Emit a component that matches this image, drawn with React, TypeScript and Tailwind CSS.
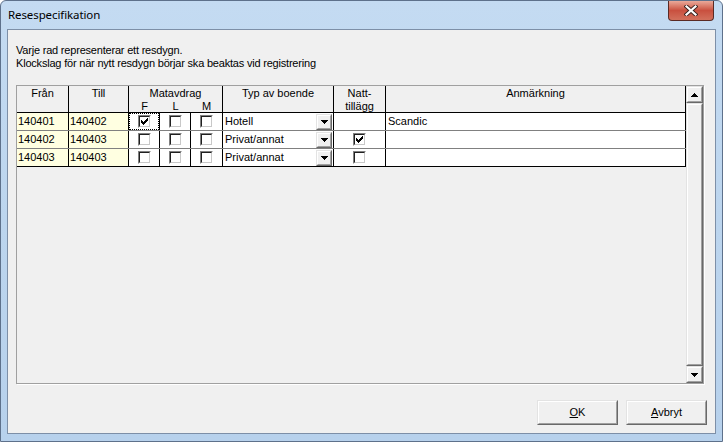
import React from "react";

type Row = {
  from: string;
  to: string;
  f: boolean;
  l: boolean;
  m: boolean;
  typ: string;
  natt: boolean | null;
  anm: string;
  focus?: boolean;
};

const rows: Row[] = [
  { from: "140401", to: "140402", f: true, l: false, m: false, typ: "Hotell", natt: null, anm: "Scandic", focus: true },
  { from: "140402", to: "140403", f: false, l: false, m: false, typ: "Privat/annat", natt: true, anm: "" },
  { from: "140403", to: "140403", f: false, l: false, m: false, typ: "Privat/annat", natt: false, anm: "" },
];

const CHECK = [
  [6, 0], [5, 1], [6, 1], [0, 2], [4, 2], [5, 2], [6, 2], [0, 3], [1, 3], [3, 3], [4, 3], [5, 3],
  [0, 4], [1, 4], [2, 4], [3, 4], [4, 4], [1, 5], [2, 5], [3, 5], [2, 6],
];

const CheckMark = () => (
  <svg width="7" height="7" viewBox="0 0 7 7" shapeRendering="crispEdges">
    {CHECK.map(([x, y]) => (
      <rect key={`${x}-${y}`} x={x} y={y} width="1" height="1" fill="#000" />
    ))}
  </svg>
);

const Arrow = ({ up }: { up?: boolean }) => (
  <svg width="7" height="4" viewBox="0 0 7 4" shapeRendering="crispEdges" className={up ? "rotate-180" : ""}>
    <rect x="0" y="0" width="7" height="1" fill="#000" />
    <rect x="1" y="1" width="5" height="1" fill="#000" />
    <rect x="2" y="2" width="3" height="1" fill="#000" />
    <rect x="3" y="3" width="1" height="1" fill="#000" />
  </svg>
);

const Check = ({ on }: { on: boolean }) => (
  <div className="h-[13px] w-[13px] border border-t-[#808080] border-l-[#808080] border-b-white border-r-white">
    <div className="flex h-full w-full items-center justify-center border border-t-[#202020] border-l-[#202020] border-b-[#c8c8c8] border-r-[#c8c8c8] bg-white">
      {on && <CheckMark />}
    </div>
  </div>
);

// classic raised 3d face
const Raised = ({ className, children }: { className: string; children?: React.ReactNode }) => (
  <div className={`border border-t-[#e3e3e3] border-l-[#e3e3e3] border-b-[#696969] border-r-[#696969] bg-[#f0f0f0] ${className}`}>
    <div className="flex h-full w-full items-center justify-center border border-t-white border-l-white border-b-[#a0a0a0] border-r-[#a0a0a0]">
      {children}
    </div>
  </div>
);

const CheckCell = ({ on, w, focus }: { on: boolean; w: string; focus?: boolean }) => (
  <div className={`${w} flex h-full items-center justify-center border-r border-black bg-white`}>
    {focus ? (
      <div className="flex h-full w-full items-center justify-center border border-dotted border-black">
        <Check on={on} />
      </div>
    ) : (
      <Check on={on} />
    )}
  </div>
);

const App = () => {
  return (
    <div className="h-[442px] w-[723px] bg-white">
      <div className="flex h-full w-full flex-col overflow-hidden rounded-t-[6px] border border-[#5e718b] bg-linear-to-b from-[#c4dbf2] via-[#bcd5ee] to-[#b7d1ec] font-['Liberation_Sans',Arial,sans-serif] text-[11px] leading-[13px] text-black">
        {/* TITLE BAR */}
        <div className="relative flex h-[28px] shrink-0 items-center pl-[7px]">
          <span className="font-['Noto_Sans',sans-serif] text-[11.5px] leading-[16px] tracking-[-0.1px] text-black">Resespecifikation</span>
          <div className="absolute right-[8px] top-0 flex h-[20px] w-[46px] items-center justify-center rounded-b-[4px] border border-t-0 border-[#5a2a24] bg-linear-to-b from-[#e9a99a] via-[#c9503f] to-[#d2705c]">
            <svg width="14" height="11" viewBox="0 0 14 11">
              <path d="M2.5 1.5 L11.5 9.5 M11.5 1.5 L2.5 9.5" stroke="#3a2420" strokeWidth="4" strokeLinecap="square" />
              <path d="M2.5 1.5 L11.5 9.5 M11.5 1.5 L2.5 9.5" stroke="#ffffff" strokeWidth="2.2" strokeLinecap="square" />
            </svg>
          </div>
        </div>

        {/* CLIENT AREA */}
        <div className="mx-[6px] mb-[7px] flex flex-1 flex-col border border-[#7d8fa7] bg-[#f0f0f0] px-[8px] pt-[14px]">
          <p className="tracking-[-0.2px]">Varje rad representerar ett resdygn.</p>
          <p className="tracking-[-0.2px]">Klockslag för när nytt resdygn börjar ska beaktas vid registrering</p>

          {/* GRID */}
          <div className="mt-[15px] flex h-[299px] w-[688px] border border-[#a0a0a0] shadow-[1px_1px_0_#ffffff]">
            <div className="flex w-[669px] flex-col">
              {/* HEADER */}
              <div className="flex h-[27px] shrink-0 border-b border-black text-center">
                <div className="w-[52px] border-r border-black pt-[1px]">Från</div>
                <div className="w-[60px] border-r border-black pt-[1px]">Till</div>
                <div className="flex w-[94px] flex-col border-r border-black pt-[1px]">
                  <span>Matavdrag</span>
                  <div className="flex">
                    <span className="w-[31px]">F</span>
                    <span className="w-[31px]">L</span>
                    <span className="w-[31px]">M</span>
                  </div>
                </div>
                <div className="w-[111px] border-r border-black pt-[1px]">Typ av boende</div>
                <div className="flex w-[52px] flex-col border-r border-black pt-[1px]">
                  <span>Natt-</span>
                  <span>tillägg</span>
                </div>
                <div className="w-[300px] border-r border-black pt-[1px]">Anmärkning</div>
              </div>

              {/* ROWS */}
              {rows.map((r, i) => (
                <div
                  key={r.from + i}
                  className={`flex h-[18px] shrink-0 border-b ${i === rows.length - 1 ? "border-black" : "border-[#808080]"}`}
                >
                  <div className="flex w-[52px] items-center border-r border-black bg-[#ffffe1] pl-[1px]">{r.from}</div>
                  <div className="flex w-[60px] items-center border-r border-black bg-[#ffffe1] pl-[1px]">{r.to}</div>
                  <CheckCell on={r.f} w="w-[31px]" focus={r.focus} />
                  <CheckCell on={r.l} w="w-[31px]" />
                  <CheckCell on={r.m} w="w-[32px]" />
                  <div className="flex w-[111px] items-center justify-between border-r border-black bg-white pl-[2px] pr-[1px]">
                    <span>{r.typ}</span>
                    <Raised className="h-[16px] w-[16px]">
                      <Arrow />
                    </Raised>
                  </div>
                  <div className="flex w-[52px] items-center justify-center border-r border-black bg-white">
                    {r.natt !== null && <Check on={r.natt} />}
                  </div>
                  <div className="flex w-[300px] items-center border-r border-black bg-white pl-[2px]">{r.anm}</div>
                </div>
              ))}
              <div className="flex-1" />
            </div>

            {/* SCROLLBAR */}
            <div className="flex w-[17px] flex-col">
              <Raised className="h-[17px] w-[17px] shrink-0">
                <Arrow up />
              </Raised>
              <Raised className="w-[17px] flex-1" />
              <Raised className="h-[17px] w-[17px] shrink-0">
                <Arrow />
              </Raised>
            </div>
          </div>

          {/* BUTTONS */}
          <div className="mt-[16px] flex justify-end gap-[8px]">
            <Raised className="h-[25px] w-[81px]">
              <span>
                <span className="underline">O</span>K
              </span>
            </Raised>
            <Raised className="h-[25px] w-[81px]">
              <span>
                <span className="underline">A</span>vbryt
              </span>
            </Raised>
          </div>
        </div>
      </div>
    </div>
  );
};

export default App;
